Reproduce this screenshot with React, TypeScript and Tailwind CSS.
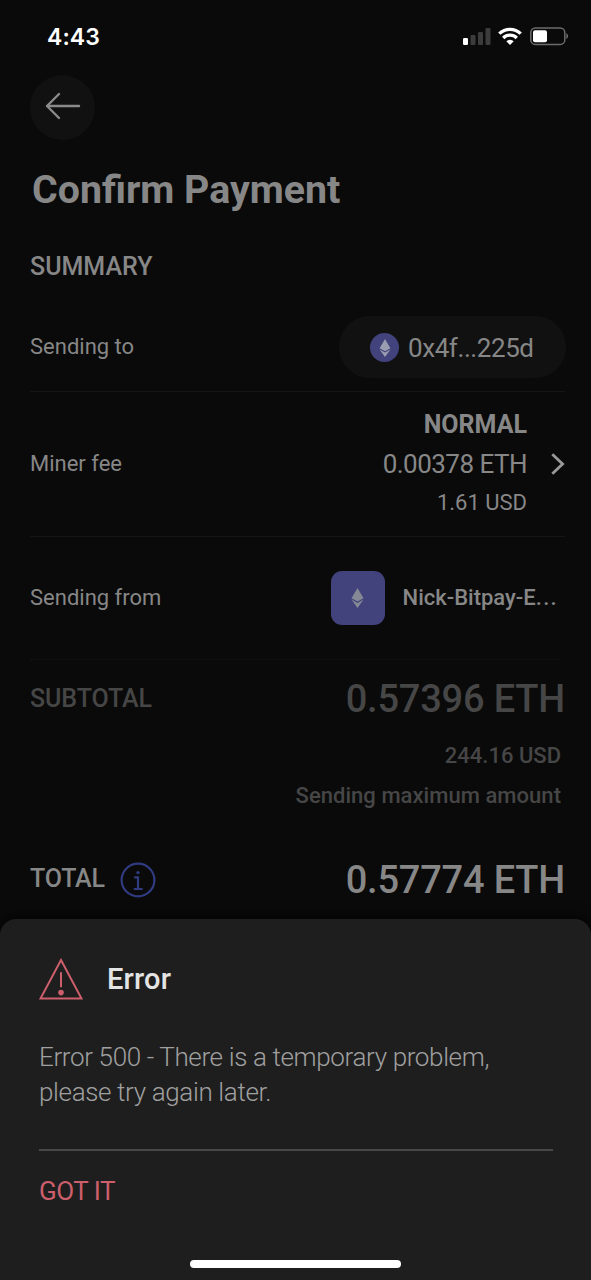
import type { ReactNode } from 'react'

function EthMark({ className }: { className?: string }) {
  return (
    <svg viewBox="0 0 12 20" className={className} fill="currentColor">
      <path d="M6 0 12 10.2 6 13.6 0 10.2z" />
      <path d="M6 15.1 0 11.6 6 20 12 11.6z" />
    </svg>
  )
}

function StatusBar() {
  return (
    <div className="flex h-[72px] items-center justify-between pr-[22px] pl-[47px]">
      <div className="pt-[2px] font-[Inter,sans-serif] text-[23px] leading-none font-semibold tracking-[0.1px] text-white">
        4:43
      </div>
      <svg width="107" height="20" viewBox="462 26 107 20">
        <rect x="463" y="38" width="5" height="7" rx="1.2" fill="#fff" />
        <rect x="470.5" y="35" width="5" height="10" rx="1.2" fill="#3c3c3c" />
        <rect x="478" y="32" width="5" height="13" rx="1.2" fill="#3c3c3c" />
        <rect x="485.5" y="28" width="5" height="17" rx="1.2" fill="#3c3c3c" />
        <g fill="none" stroke="#fff" strokeWidth="3.3">
          <path d="M499.3 33.7a15.2 15.2 0 0 1 21.4 0" />
          <path d="M503.2 38a9.6 9.6 0 0 1 13.6 0" />
        </g>
        <path d="M506.3 41.2a5.3 5.3 0 0 1 7.4 0L510 45z" fill="#fff" />
        <rect x="530.8" y="28" width="34" height="16.4" rx="4.5" fill="none" stroke="#6c6c6c" strokeWidth="1.5" />
        <rect x="533" y="30.2" width="14" height="12" rx="2" fill="#fff" />
        <path d="M566.3 33.3v5.8c2.4-1 2.4-4.8 0-5.8z" fill="#6c6c6c" />
      </svg>
    </div>
  )
}

function Row({ label, className, children }: { label: string; className: string; children: ReactNode }) {
  return (
    <div className={`flex items-center justify-between border-[#151515] ${className}`}>
      <div className="text-[22px] leading-none">{label}</div>
      {children}
    </div>
  )
}

function ErrorSheet() {
  return (
    <div className="flex-1 rounded-t-[16px] bg-[#1e1e1e] px-[39px] pt-[39px] shadow-[0_0_16px_#000]">
      <div className="flex h-[43px] items-center">
        <svg width="44" height="43" viewBox="0 0 44 43" fill="none" stroke="#cc5f6b" strokeWidth="2">
          <path d="M22 2 42.5 40.6h-41z" />
          <path d="M22 14.3v15" />
          <circle cx="22" cy="34.6" r="2.8" fill="#cc5f6b" stroke="none" />
        </svg>
        <h2 className="ml-6 text-[29px] leading-none font-medium tracking-[0.2px] text-[#e4e4e4]">Error</h2>
      </div>
      <p className="mt-[39px] text-[26px] leading-[35px] font-light tracking-[-0.36px] text-[#a0a0a0]">
        Error 500 - There is a temporary problem,
        <br />
        please try again later.
      </p>
      <div className="mt-[39px] h-[2px] w-[514px] bg-[#484848]" />
      <button className="mt-[25px] block text-[26px] leading-[30px] tracking-[-0.5px] text-[#cc5f6b]">GOT IT</button>
      <div className="mt-[54px] ml-[151px] h-[8px] w-[211px] rounded-full bg-white" />
    </div>
  )
}

export default function App() {
  return (
    <div className="flex h-[1280px] w-[591px] flex-col overflow-hidden bg-[#0a0a0a] font-[Roboto,sans-serif] whitespace-nowrap text-[#878787]">
      <StatusBar />
      <div className="h-[847px] pr-[26px] pl-[30px]">
        <button className="mt-[3px] flex size-[65px] items-center justify-center rounded-full bg-[#111111]">
          <svg width="36" height="28" viewBox="0 0 36 28" fill="none" stroke="#8a8a8a" strokeWidth="2.4" strokeLinecap="round" strokeLinejoin="round" className="mb-1">
            <path d="M34 14H2M14 2 2 14l12 12" />
          </svg>
        </button>
        <h1 className="mt-[27px] ml-[2px] text-[39.3px] leading-[46px] font-bold">Confirm Payment</h1>
        <div className="mt-[38px] pt-px text-[25px] leading-[30px] font-medium">SUMMARY</div>

        <Row label="Sending to" className="mt-[21px] h-[89px] border-b">
          <div className="-mr-[1px] flex h-[62px] w-[227px] items-center rounded-full bg-[#111111] pl-[31px]">
            <div className="mt-px flex size-[29px] items-center justify-center rounded-full bg-[#42427c] text-[#9a9cb0]">
              <EthMark className="h-[18px] w-3" />
            </div>
            <div className="ml-[9px] pt-px text-[26px] leading-none tracking-[-0.42px]">0x4f...225d</div>
          </div>
        </Row>

        <Row label="Miner fee" className="h-[145px] border-b">
          <div className="flex items-center">
            <div className="pb-px text-right">
              <div className="text-[25px] leading-[39px] font-bold">NORMAL</div>
              <div className="text-[26px] leading-[40px] tracking-[-0.52px]">0.00378 ETH</div>
              <div className="text-[22px] leading-[38px]">1.61 USD</div>
            </div>
            <svg width="14" height="22" viewBox="0 0 14 22" fill="none" stroke="#999" strokeWidth="2.8" className="ml-6">
              <path d="M1.3 1.3 11.6 11 1.3 20.7" />
            </svg>
          </div>
        </Row>

        <Row label="Sending from" className="mr-[5px] h-[123px] border-b border-dotted">
          <div className="mr-[2px] flex items-center">
            <div className="flex size-[54px] items-center justify-center rounded-[11px] bg-[#42427c] text-[#858995]">
              <EthMark className="h-5 w-[13px]" />
            </div>
            <div className="ml-[18px] text-[22px] leading-none font-medium">
              Nick-Bitpay-E<span className="tracking-[1.3px]">...</span>
            </div>
          </div>
        </Row>

        <div className="mt-[15px] flex h-[46px] items-center justify-between text-[#464646]">
          <div className="text-[25px] leading-none font-medium tracking-[-0.1px]">SUBTOTAL</div>
          <div className="pt-px text-[38px] leading-none font-medium tracking-[-0.2px]">0.57396 ETH</div>
        </div>
        <div className="mt-[15px] mr-[4px] text-right text-[22px] leading-[40px] font-medium text-[#464646]">
          <div>244.16 USD</div>
          <div className="tracking-[0.04px]">Sending maximum amount</div>
        </div>

        <div className="mt-[41px] flex h-[46px] items-center">
          <div className="pb-[3px] text-[25px] leading-none font-medium tracking-[-0.2px]">TOTAL</div>
          <svg width="36" height="36" viewBox="0 0 36 36" fill="none" stroke="#303b80" strokeWidth="2.2" className="ml-[15.5px]">
            <circle cx="18" cy="18" r="16.4" />
            <path d="M14.2 15.4H18V27M13.8 27h8.8" />
            <circle cx="18" cy="10.6" r="1.7" fill="#303b80" stroke="none" />
          </svg>
          <div className="ml-auto text-[38px] leading-none font-medium tracking-[-0.2px]">0.57774 ETH</div>
        </div>
      </div>
      <ErrorSheet />
    </div>
  )
}
